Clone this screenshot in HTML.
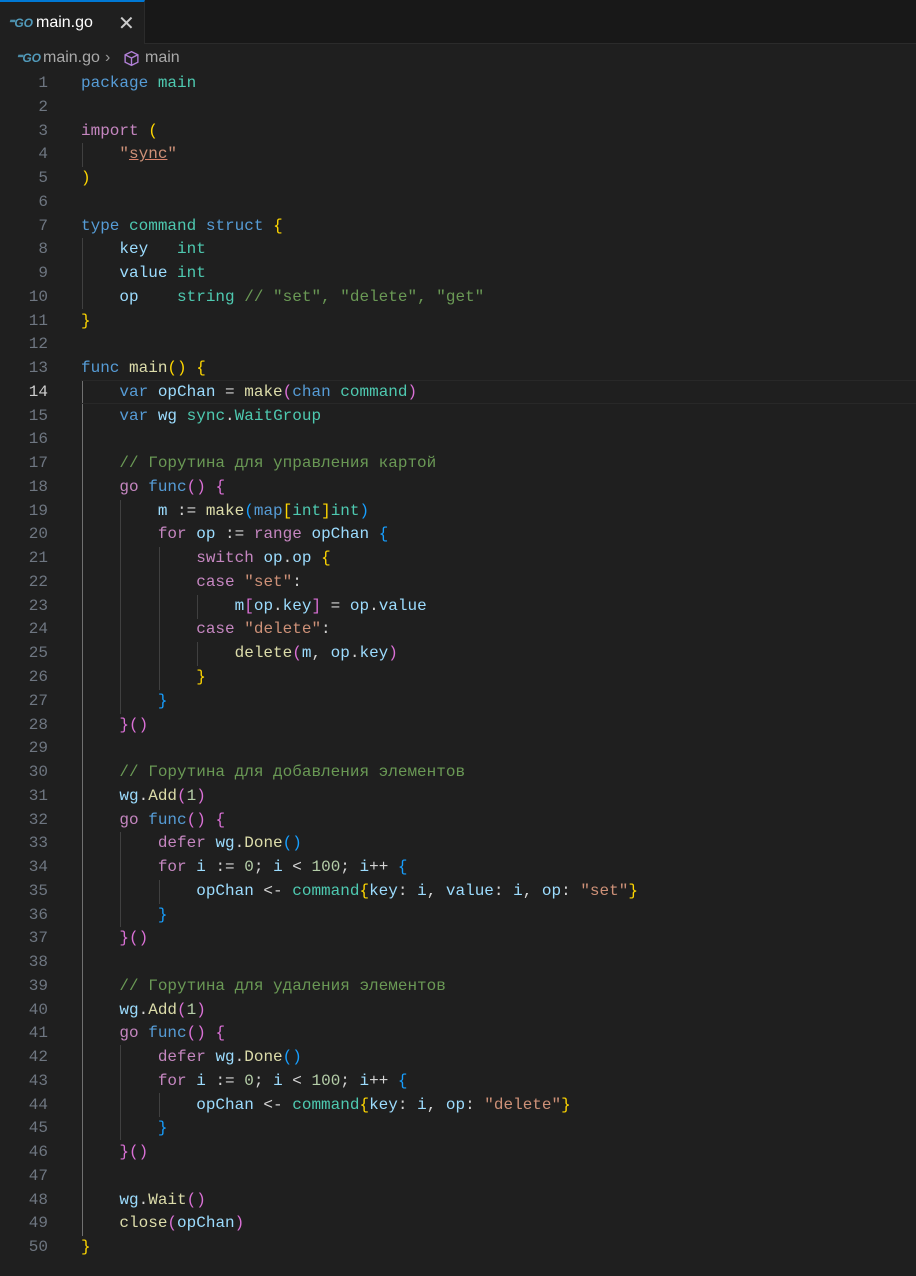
<!DOCTYPE html>
<html><head><meta charset="utf-8"><style>
*{margin:0;padding:0;box-sizing:border-box}
body{width:916px;height:1276px;background:#1f1f1f;overflow:hidden;position:relative;font-family:"Liberation Mono",monospace;font-size:16px;color:#d4d4d4}
.tabbar{position:absolute;left:0;top:0;width:916px;height:44px;background:#181818;border-bottom:1px solid #2b2b2b}
.tab{position:absolute;left:0;top:0;width:145px;height:44px;background:#1f1f1f;border-top:2px solid #0078d4;border-right:1px solid #2b2b2b;font-family:"Liberation Sans",sans-serif;font-size:16px;color:#fff}
.go{font-family:"Liberation Sans",sans-serif;font-weight:bold;font-style:italic;color:#519aba;font-size:12px}
.crumb{position:absolute;top:49px;font-family:"Liberation Sans",sans-serif;font-size:16px;color:#a9a9a9}
.ln{position:absolute;left:0;width:48px;text-align:right;color:#6e7681;height:23.76px;line-height:23.76px}
.code{position:absolute;left:81px;white-space:pre;height:23.76px;line-height:23.76px}
.g{position:absolute;width:1px;background:#404040}
.k{color:#569cd6}.c{color:#c586c0}.t{color:#4ec9b0}.v{color:#9cdcfe}.f{color:#dcdcaa}.s{color:#ce9178}.cm{color:#6a9955}.n{color:#b5cea8}
.b1{color:#ffd700}.b2{color:#da70d6}.b3{color:#179fff}
</style></head><body>
<div class="tabbar"></div>
<div class="tab"><span class="go" style="position:absolute;left:8px;top:14px">⁼GO</span><span style="position:absolute;left:36px;top:12px">main.go</span><span style="position:absolute;left:118px;top:9px;font-size:20px;color:#ccc">✕</span></div>
<div class="crumb" style="left:16px"><span class="go">⁼GO</span></div>
<div class="crumb" style="left:43px">main.go</div>
<div class="crumb" style="left:105px;color:#999">›</div>
<svg width="17" height="17" viewBox="0 0 16 16" style="position:absolute;left:123px;top:50px"><path d="M8 1.5 14 4.5v7L8 14.5 2 11.5v-7z M2 4.5 8 7.5 14 4.5 M8 7.5v7" fill="none" stroke="#b180d7" stroke-width="1.3"/></svg>
<div class="crumb" style="left:145px">main</div>
<div class="g" style="left:82px;top:143px;height:24px"></div>
<div class="g" style="left:82px;top:238px;height:71px"></div>
<div class="g" style="left:82px;top:381px;height:855px;background:#707070"></div>
<div class="g" style="left:120px;top:500px;height:214px"></div>
<div class="g" style="left:120px;top:832px;height:95px"></div>
<div class="g" style="left:120px;top:1045px;height:95px"></div>
<div class="g" style="left:159px;top:547px;height:143px"></div>
<div class="g" style="left:159px;top:880px;height:24px"></div>
<div class="g" style="left:159px;top:1093px;height:24px"></div>
<div class="g" style="left:197px;top:595px;height:24px"></div>
<div class="g" style="left:197px;top:642px;height:24px"></div>
<div style="position:absolute;left:81px;top:380px;width:835px;height:24px;border-top:1px solid #282828;border-bottom:1px solid #282828"></div>
<div id="c"></div>
<script>
var L=[
'<span class="k">package</span> <span class="t">main</span>',
'',
'<span class="c">import</span> <span class="b1">(</span>',
'    <span class="s">"<span style="text-decoration:underline;text-decoration-color:#d9826b">sync</span>"</span>',
'<span class="b1">)</span>',
'',
'<span class="k">type</span> <span class="t">command</span> <span class="k">struct</span> <span class="b1">{</span>',
'    <span class="v">key</span>   <span class="t">int</span>',
'    <span class="v">value</span> <span class="t">int</span>',
'    <span class="v">op</span>    <span class="t">string</span> <span class="cm">// "set", "delete", "get"</span>',
'<span class="b1">}</span>',
'',
'<span class="k">func</span> <span class="f">main</span><span class="b1">()</span> <span class="b1">{</span>',
'    <span class="k">var</span> <span class="v">opChan</span> = <span class="f">make</span><span class="b2">(</span><span class="k">chan</span> <span class="t">command</span><span class="b2">)</span>',
'    <span class="k">var</span> <span class="v">wg</span> <span class="t">sync</span>.<span class="t">WaitGroup</span>',
'',
'    <span class="cm">// Горутина для управления картой</span>',
'    <span class="c">go</span> <span class="k">func</span><span class="b2">()</span> <span class="b2">{</span>',
'        <span class="v">m</span> := <span class="f">make</span><span class="b3">(</span><span class="k">map</span><span class="b1">[</span><span class="t">int</span><span class="b1">]</span><span class="t">int</span><span class="b3">)</span>',
'        <span class="c">for</span> <span class="v">op</span> := <span class="c">range</span> <span class="v">opChan</span> <span class="b3">{</span>',
'            <span class="c">switch</span> <span class="v">op</span>.<span class="v">op</span> <span class="b1">{</span>',
'            <span class="c">case</span> <span class="s">"set"</span>:',
'                <span class="v">m</span><span class="b2">[</span><span class="v">op</span>.<span class="v">key</span><span class="b2">]</span> = <span class="v">op</span>.<span class="v">value</span>',
'            <span class="c">case</span> <span class="s">"delete"</span>:',
'                <span class="f">delete</span><span class="b2">(</span><span class="v">m</span>, <span class="v">op</span>.<span class="v">key</span><span class="b2">)</span>',
'            <span class="b1">}</span>',
'        <span class="b3">}</span>',
'    <span class="b2">}()</span>',
'',
'    <span class="cm">// Горутина для добавления элементов</span>',
'    <span class="v">wg</span>.<span class="f">Add</span><span class="b2">(</span><span class="n">1</span><span class="b2">)</span>',
'    <span class="c">go</span> <span class="k">func</span><span class="b2">()</span> <span class="b2">{</span>',
'        <span class="c">defer</span> <span class="v">wg</span>.<span class="f">Done</span><span class="b3">()</span>',
'        <span class="c">for</span> <span class="v">i</span> := <span class="n">0</span>; <span class="v">i</span> &lt; <span class="n">100</span>; <span class="v">i</span>++ <span class="b3">{</span>',
'            <span class="v">opChan</span> &lt;- <span class="t">command</span><span class="b1">{</span><span class="v">key</span>: <span class="v">i</span>, <span class="v">value</span>: <span class="v">i</span>, <span class="v">op</span>: <span class="s">"set"</span><span class="b1">}</span>',
'        <span class="b3">}</span>',
'    <span class="b2">}()</span>',
'',
'    <span class="cm">// Горутина для удаления элементов</span>',
'    <span class="v">wg</span>.<span class="f">Add</span><span class="b2">(</span><span class="n">1</span><span class="b2">)</span>',
'    <span class="c">go</span> <span class="k">func</span><span class="b2">()</span> <span class="b2">{</span>',
'        <span class="c">defer</span> <span class="v">wg</span>.<span class="f">Done</span><span class="b3">()</span>',
'        <span class="c">for</span> <span class="v">i</span> := <span class="n">0</span>; <span class="v">i</span> &lt; <span class="n">100</span>; <span class="v">i</span>++ <span class="b3">{</span>',
'            <span class="v">opChan</span> &lt;- <span class="t">command</span><span class="b1">{</span><span class="v">key</span>: <span class="v">i</span>, <span class="v">op</span>: <span class="s">"delete"</span><span class="b1">}</span>',
'        <span class="b3">}</span>',
'    <span class="b2">}()</span>',
'',
'    <span class="v">wg</span>.<span class="f">Wait</span><span class="b2">()</span>',
'    <span class="f">close</span><span class="b2">(</span><span class="v">opChan</span><span class="b2">)</span>',
'<span class="b1">}</span>'
];
var h='';
for(var i=0;i<L.length;i++){var t=(72+i*23.76).toFixed(2);
h+='<div class="ln" style="top:'+t+'px'+(i==13?';color:#ccc':'')+'">'+(i+1)+'</div><div class="code" style="top:'+t+'px">'+L[i]+'</div>';}
document.getElementById('c').innerHTML=h;
</script>
</body></html>
